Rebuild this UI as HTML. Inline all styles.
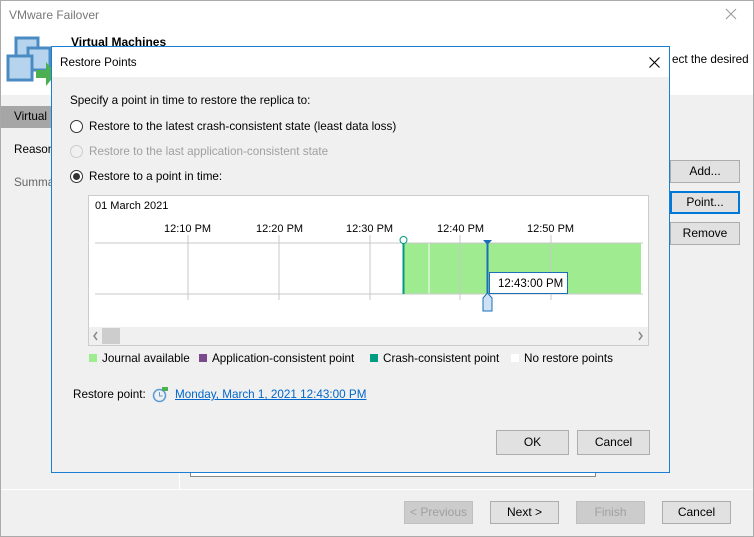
<!DOCTYPE html><html><head><style>
*{box-sizing:border-box}body{margin:0;width:754px;height:537px;overflow:hidden;font-family:"Liberation Sans",sans-serif;font-size:11.7px;color:#000;background:#f0f0f0;position:relative}
.a{position:absolute}
.btn{position:absolute;background:#e1e1e1;border:1px solid #adadad;text-align:center;line-height:20px;font-size:12px}
.dis{color:#a0a0a0;background:#cccccc;border-color:#bfbfbf}
</style></head><body>
<div class="a" style="left:0;top:0;width:754px;height:537px;border:1px solid #aaa"></div>
<div class="a" style="left:1px;top:1px;width:752px;height:94px;background:#fff"></div>
<div class="a" style="left:9px;top:8px;color:#777;font-size:12px">VMware Failover</div>
<svg class="a" style="left:725px;top:8px" width="12" height="12"><path d="M1 1l10 10M11 1L1 11" stroke="#999" stroke-width="1"/></svg>
<div class="a" style="left:71px;top:35px;font-weight:bold;font-size:12px">Virtual Machines</div>
<div class="a" style="left:672px;top:53px">ect the desired</div>
<svg class="a" style="left:6px;top:36px" width="50" height="54"><rect x="10" y="2" width="22" height="22" fill="#b7d4ee" stroke="#4b8bc3" stroke-width="3"/><rect x="22" y="12" width="22" height="22" fill="#b7d4ee" stroke="#4b8bc3" stroke-width="3"/><rect x="2" y="20" width="24" height="24" fill="#b7d4ee" stroke="#4b8bc3" stroke-width="3"/><path d="M30 34h10v-8l10 12-10 12v-8h-10z" fill="#4cb050"/></svg>
<div class="a" style="left:1px;top:106px;width:179px;height:22px;background:#a6a6a6"></div>
<div class="a" style="left:14px;top:110px">Virtual</div>
<div class="a" style="left:14px;top:143px">Reason</div>
<div class="a" style="left:14px;top:176px;color:#666">Summa</div>
<div class="a" style="left:179px;top:95px;width:1px;height:394px;background:#fff"></div>
<div class="a" style="left:1px;top:489px;width:752px;height:1px;background:#fff"></div>
<div class="a" style="left:190px;top:470px;width:406px;height:7px;border:1px solid #888;border-top:none;background:#fff"></div>
<div class="btn" style="left:670px;top:160px;width:70px;height:23px">Add...</div>
<div class="btn" style="left:670px;top:191px;width:70px;height:23px;border:2px solid #0078d7;line-height:18px">Point...</div>
<div class="btn" style="left:670px;top:222px;width:70px;height:23px">Remove</div>
<div class="btn dis" style="left:404px;top:501px;width:69px;height:23px">&lt; Previous</div>
<div class="btn" style="left:490px;top:501px;width:69px;height:23px">Next &gt;</div>
<div class="btn dis" style="left:576px;top:501px;width:69px;height:23px">Finish</div>
<div class="btn" style="left:662px;top:501px;width:69px;height:23px">Cancel</div>

<div class="a" style="left:51px;top:46px;width:619px;height:427px;border:1px solid #1a7fd4;background:#f0f0f0">
<div class="a" style="left:0;top:0;width:617px;height:30px;background:#fff"></div>
<div class="a" style="left:8px;top:9px">Restore Points</div>
<svg class="a" style="left:597px;top:10px" width="11" height="11"><path d="M0.5 0.5l10 10M10.5 0.5l-10 10" stroke="#000" stroke-width="1.1"/></svg>
<div class="a" style="left:18px;top:47px">Specify a point in time to restore the replica to:</div>
<div class="a" style="left:18px;top:73px;width:13px;height:13px;border:1px solid #333;border-radius:50%;background:#fff"></div>
<div class="a" style="left:37px;top:73px">Restore to the latest crash-consistent state (least data loss)</div>
<div class="a" style="left:18px;top:98px;width:13px;height:13px;border:1px solid #ccc;border-radius:50%"></div>
<div class="a" style="left:37px;top:98px;color:#a0a0a0">Restore to the last application-consistent state</div>
<div class="a" style="left:18px;top:123px;width:13px;height:13px;border:1px solid #333;border-radius:50%;background:#fff"><div class="a" style="left:2px;top:2px;width:7px;height:7px;border-radius:50%;background:#333"></div></div>
<div class="a" style="left:37px;top:123px">Restore to a point in time:</div>
</div>
<div class="a" style="left:88px;top:195px;width:561px;height:151px;border:1px solid #ccc;background:#fff"></div>
<div class="a" style="left:95px;top:200px;font-size:11px">01 March 2021</div>
<div class="a" style="left:164px;top:223px;font-size:11px">12:10 PM</div>
<div class="a" style="left:256px;top:223px;font-size:11px">12:20 PM</div>
<div class="a" style="left:346px;top:223px;font-size:11px">12:30 PM</div>
<div class="a" style="left:437px;top:223px;font-size:11px">12:40 PM</div>
<div class="a" style="left:527px;top:223px;font-size:11px">12:50 PM</div>
<svg class="a" style="left:88px;top:195px" width="561" height="151">
<rect x="316" y="48" width="237" height="51" fill="#9feb8f"/>
<line x1="341" y1="48" x2="341" y2="99" stroke="#fff"/>
<g stroke="#c8c8c8"><line x1="7" y1="48" x2="555" y2="48"/><line x1="7" y1="99" x2="555" y2="99"/>
<line x1="100" y1="40" x2="100" y2="105"/><line x1="191" y1="40" x2="191" y2="105"/><line x1="282" y1="40" x2="282" y2="105"/><line x1="372" y1="40" x2="372" y2="105"/><line x1="463" y1="40" x2="463" y2="105"/></g>
<line x1="315.5" y1="48" x2="315.5" y2="99" stroke="#009b80" stroke-width="2"/><circle cx="315.5" cy="45" r="3.5" fill="#fff" stroke="#009b80"/>
<line x1="399.5" y1="48" x2="399.5" y2="105" stroke="#1a6fb8" stroke-width="2"/><path d="M395 45h9l-4.5 5z" fill="#1a6fb8"/>
<path d="M395 103l4.5-5 4.5 5v13h-9z" fill="#cfe2f5" stroke="#1a6fb8"/>
<rect x="401.5" y="77.5" width="78" height="21" fill="#fff" stroke="#1a6fb8"/>
<text x="410" y="92" font-size="11.5" font-family="Liberation Sans">12:43:00 PM</text>
<rect x="1" y="132" width="559" height="18" fill="#f0f0f0"/><rect x="14" y="133" width="18" height="16" fill="#cdcdcd"/>
<path d="M9 137l-3 4 3 4M551 137l3 4-3 4" stroke="#888" stroke-width="1.5" fill="none"/>
</svg>
<div class="a" style="left:89px;top:354px;width:8px;height:8px;background:#9feb8f"></div><div class="a" style="left:102px;top:352px">Journal available</div>
<div class="a" style="left:199px;top:354px;width:8px;height:8px;background:#7c4a8c"></div><div class="a" style="left:212px;top:352px">Application-consistent point</div>
<div class="a" style="left:370px;top:354px;width:8px;height:8px;background:#009b80"></div><div class="a" style="left:383px;top:352px">Crash-consistent point</div>
<div class="a" style="left:511px;top:354px;width:8px;height:8px;background:#fff"></div><div class="a" style="left:524px;top:352px">No restore points</div>
<div class="a" style="left:73px;top:388px">Restore point:</div>
<svg class="a" style="left:152px;top:386px" width="18" height="18"><circle cx="7.5" cy="9.5" r="6" fill="none" stroke="#5a9bd5" stroke-width="1.5"/><path d="M7.5 6v4h3" stroke="#5a9bd5" fill="none"/><rect x="10" y="1" width="6" height="4" fill="#4cb050"/></svg>
<div class="a" style="left:175px;top:388px;color:#0066cc;text-decoration:underline">Monday, March 1, 2021 12:43:00 PM</div>
<div class="btn" style="left:496px;top:430px;width:73px;height:25px;line-height:23px">OK</div>
<div class="btn" style="left:577px;top:430px;width:73px;height:25px;line-height:23px">Cancel</div>
</body></html>
